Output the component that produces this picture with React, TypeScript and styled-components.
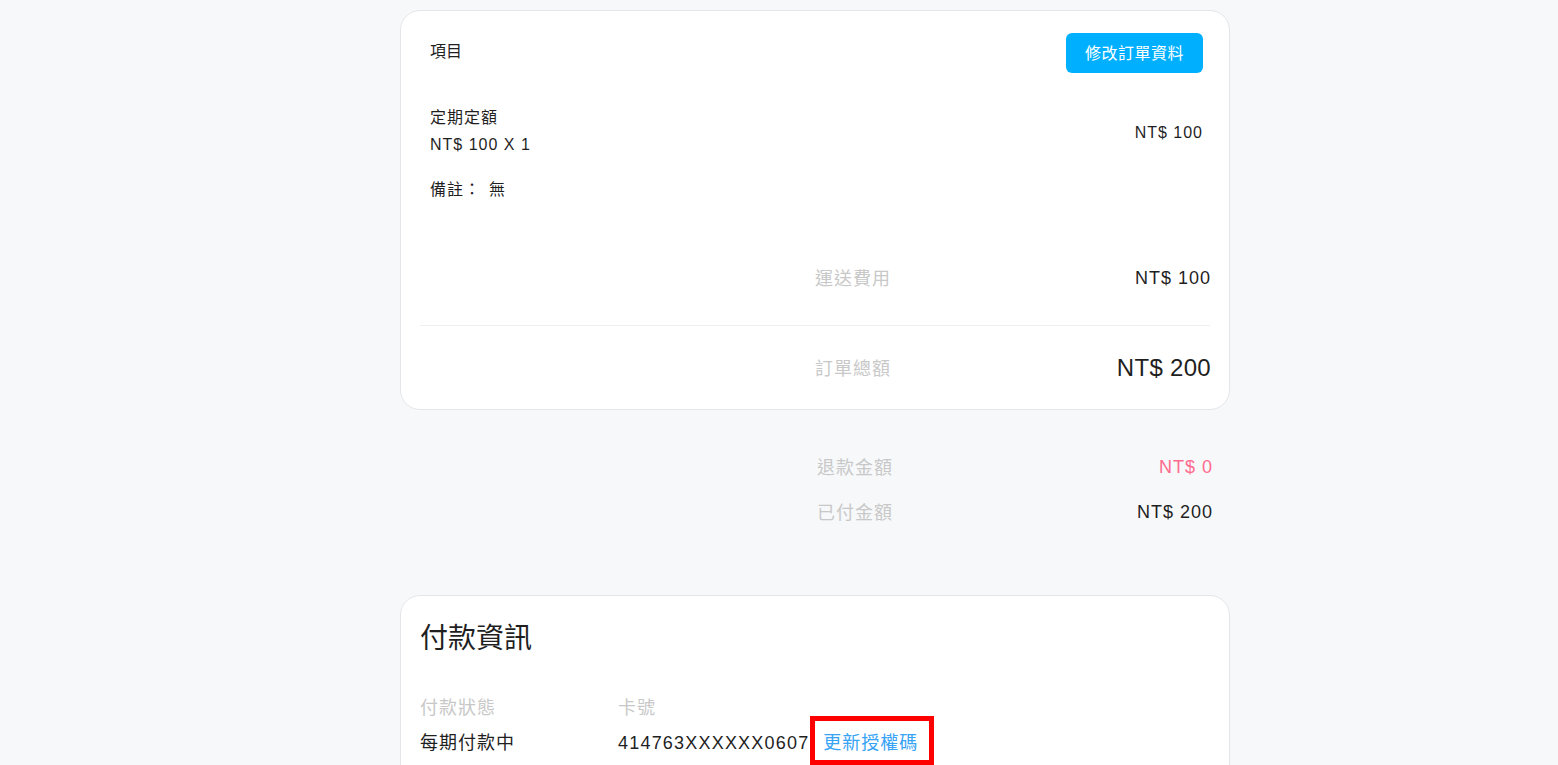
import React from 'react'
import styled, { createGlobalStyle } from 'styled-components'

const GlobalStyle = createGlobalStyle`
  html, body {
    margin: 0;
    padding: 0;
    background: #f7f8fa;
  }
  body {
    font-family: 'Liberation Sans', 'Noto Sans CJK TC', sans-serif;
    color: #1f1f1f;
  }
`

const Page = styled.div`
  width: 830px;
  margin-left: 400px;
  padding-top: 10px;
`

const Card = styled.div`
  background: #ffffff;
  border: 1px solid #e4e6ea;
  border-radius: 20px;
  padding: 22px 19px 20px;
`

const ItemSection = styled.div`
  padding: 0 7px 0 10px;
`

const HeaderRow = styled.div`
  display: flex;
  justify-content: space-between;
  align-items: flex-start;
  height: 40px;
`

const HeaderTitle = styled.div`
  font-size: 16px;
  line-height: 34px;
  padding-top: 2px;
`

const EditButton = styled.button`
  height: 40px;
  padding: 0 19px 3px;
  border: none;
  border-radius: 6px;
  background: #00b0ff;
  color: #ffffff;
  font-family: inherit;
  font-size: 16px;
  letter-spacing: 0.5px;
  cursor: pointer;
`

const ItemRow = styled.div`
  display: flex;
  justify-content: space-between;
  align-items: center;
  margin-top: 31px;
`

const ItemText = styled.div`
  font-size: 16px;
  letter-spacing: 1px;
  line-height: 27px;
`

const ItemPrice = styled.div`
  font-size: 16px;
  letter-spacing: 1px;
  padding-top: 3px;
`

const Note = styled.div`
  margin-top: 20px;
  font-size: 16px;
  line-height: 24px;
  letter-spacing: 1px;
`

const NoteValue = styled.span`
  margin-left: 8px;
`

const SummaryRow = styled.div<{ $top?: number }>`
  display: flex;
  justify-content: space-between;
  align-items: center;
  width: 395px;
  height: 45px;
  margin-left: auto;
  margin-top: ${({ $top }) => $top ?? 0}px;
  letter-spacing: 1px;
`

const SummaryLabel = styled.div`
  font-size: 18px;
  color: #c8c8c8;
`

const SummaryValue = styled.div<{ $big?: boolean; $tone?: 'pink' }>`
  font-size: ${({ $big }) => ($big ? '24px' : '18px')};
  letter-spacing: ${({ $big }) => ($big ? '0.3px' : '1px')};
  padding-top: ${({ $big }) => ($big ? '2px' : '3px')};
  color: ${({ $tone }) => ($tone === 'pink' ? '#ff6b8e' : '#1f1f1f')};
  margin-right: -1px;
`

const Divider = styled.div`
  height: 1px;
  background: #eeeff1;
  margin: 26px 0 18px;
`

const Outside = styled.div`
  padding: 33px 18px 0 0;
`

const PaymentCard = styled(Card)`
  margin-top: 62px;
  padding: 23px 19px 40px;
`

const PaymentTitle = styled.div`
  font-size: 28px;
  line-height: 40px;
`

const InfoGrid = styled.div`
  display: grid;
  grid-template-columns: 198px 1fr;
  margin-top: 35px;
  font-size: 18px;
  letter-spacing: 1px;
  row-gap: 7px;
`

const InfoLabel = styled.div`
  color: #c8c8c8;
  line-height: 28px;
`

const InfoValue = styled.div`
  display: flex;
  align-items: center;
  line-height: 28px;
`

const CardNumber = styled.span`
  letter-spacing: 1.2px;
`

const UpdateLink = styled.a`
  position: relative;
  margin-left: 14px;
  color: #36a3f5;
  text-decoration: none;
  cursor: pointer;

  &::after {
    content: '';
    position: absolute;
    top: -13px;
    bottom: -8px;
    left: -13px;
    right: -16px;
    border: 5px solid #ff0000;
    pointer-events: none;
  }
`

export default function App() {
  return (
    <>
      <GlobalStyle />
      <Page>
        <Card>
          <ItemSection>
            <HeaderRow>
              <HeaderTitle>項目</HeaderTitle>
              <EditButton>修改訂單資料</EditButton>
            </HeaderRow>
            <ItemRow>
              <div>
                <ItemText>定期定額</ItemText>
                <ItemText>NT$ 100 X 1</ItemText>
              </div>
              <ItemPrice>NT$ 100</ItemPrice>
            </ItemRow>
            <Note>
              備註：<NoteValue>無</NoteValue>
            </Note>
          </ItemSection>

          <SummaryRow $top={52}>
            <SummaryLabel>運送費用</SummaryLabel>
            <SummaryValue>NT$ 100</SummaryValue>
          </SummaryRow>
          <Divider />
          <SummaryRow>
            <SummaryLabel>訂單總額</SummaryLabel>
            <SummaryValue $big>NT$ 200</SummaryValue>
          </SummaryRow>
        </Card>

        <Outside>
          <SummaryRow>
            <SummaryLabel>退款金額</SummaryLabel>
            <SummaryValue $tone="pink">NT$ 0</SummaryValue>
          </SummaryRow>
          <SummaryRow>
            <SummaryLabel>已付金額</SummaryLabel>
            <SummaryValue>NT$ 200</SummaryValue>
          </SummaryRow>
        </Outside>

        <PaymentCard>
          <PaymentTitle>付款資訊</PaymentTitle>
          <InfoGrid>
            <InfoLabel>付款狀態</InfoLabel>
            <InfoLabel>卡號</InfoLabel>
            <InfoValue>每期付款中</InfoValue>
            <InfoValue>
              <CardNumber>414763XXXXXX0607</CardNumber>
              <UpdateLink>更新授權碼</UpdateLink>
            </InfoValue>
          </InfoGrid>
        </PaymentCard>
      </Page>
    </>
  )
}
